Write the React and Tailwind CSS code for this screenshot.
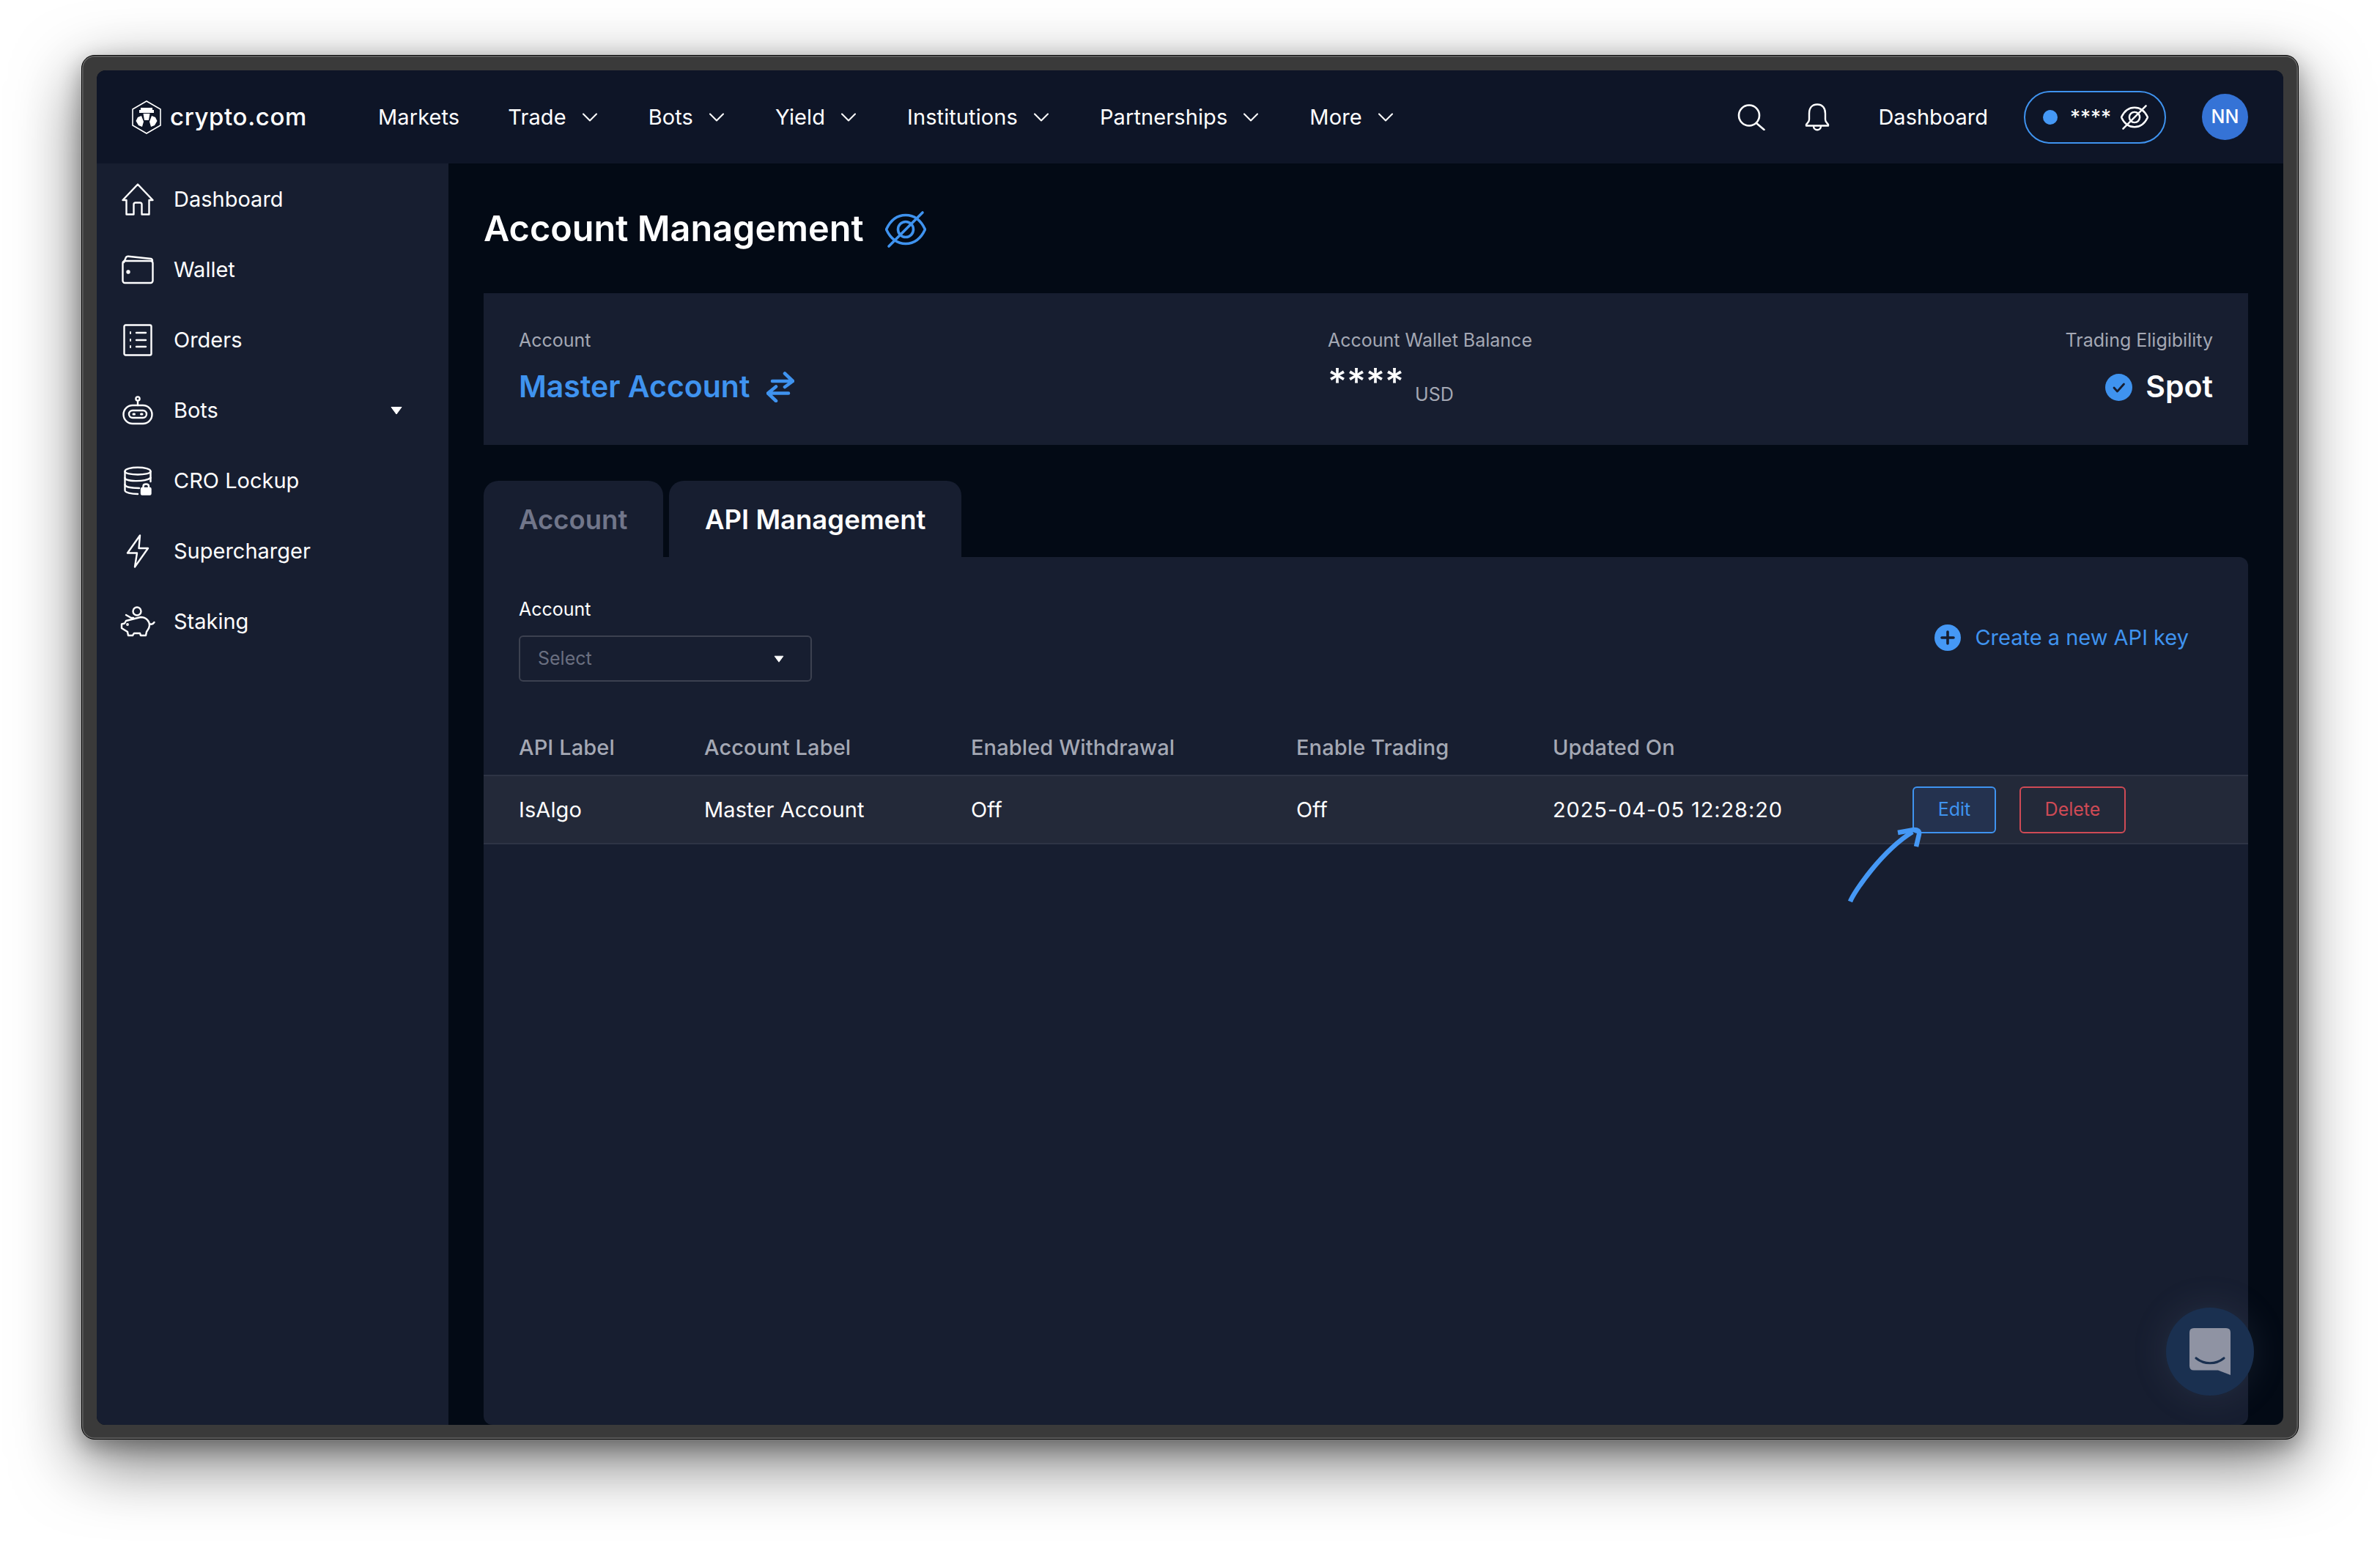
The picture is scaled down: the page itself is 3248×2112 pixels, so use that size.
import { ChevronDown } from 'lucide-react';

const navItems = ['Trade', 'Bots', 'Yield', 'Institutions', 'Partnerships', 'More'];

function Logo() {
  return (
    <svg width="40" height="46" viewBox="0 0 40 46" fill="none">
      <path d="M20 1 L39 12 V34 L20 45 L1 34 V12 Z" stroke="white" strokeWidth="1.6" />
      <path d="M12 10 H28 V13 H30 V17 H10 V13 H12 Z M15.5 18 H24.5 L23 27 H17 Z" fill="white" />
      <path d="M8 23 L13 21 L16 29 L14 36 L9 34 L5.5 28 Z M32 23 L27 21 L24 29 L26 36 L31 34 L34.5 28 Z" fill="white" />
    </svg>
  );
}

function EyeSlash({ className, size = 40 }) {
  return (
    <svg width={size} height={size} viewBox="0 0 56 56" fill="none" stroke="currentColor" strokeWidth="3.6" strokeLinecap="round" className={className}>
      <path d="M1.5 28 C8 14 18 8.5 28 8.5 C38 8.5 48 14 54.5 28 C48 42 38 47.5 28 47.5 C18 47.5 8 42 1.5 28 Z" />
      <circle cx="28" cy="28" r="10.5" />
      <path d="M5 51 L51 5" />
    </svg>
  );
}

const stroke = { fill: 'none', stroke: 'white', strokeWidth: 2.4, strokeLinejoin: 'round', strokeLinecap: 'round' };

function HomeIcon() {
  return (
    <svg width="44" height="44" viewBox="0 0 44 44" {...stroke}>
      <path d="M1.5 23 L22 1.5 L42.5 23 H37.5 V42.5 H27.5 V29 Q27.5 26.5 25 26.5 H19 Q16.5 26.5 16.5 29 V42.5 H6.5 V23 Z" />
    </svg>
  );
}

function WalletIcon() {
  return (
    <svg width="44" height="40" viewBox="0 0 44 40" {...stroke}>
      <path d="M3 10 L6 3 Q7 1.5 9 1.7 L40 5 Q42 5.5 42 8" />
      <rect x="1.5" y="8" width="41" height="30" rx="3" />
      <circle cx="9" cy="23" r="1.5" fill="white" />
    </svg>
  );
}

function OrdersIcon() {
  return (
    <svg width="40" height="44" viewBox="0 0 40 44" {...stroke}>
      <rect x="1.5" y="1.5" width="37" height="41" rx="2" />
      <path d="M18 12 H31 M18 22 H31 M18 31 H31" />
      <path d="M9 12 H11 M9 22 H11 M9 31 H11" strokeWidth="3.6" strokeLinecap="butt" />
    </svg>
  );
}

function BotsIcon() {
  return (
    <svg width="42" height="40" viewBox="0 0 42 40" {...stroke}>
      <circle cx="21" cy="4" r="2.6" />
      <path d="M21 7 V13" />
      <rect x="1.5" y="13" width="39" height="25" rx="12.5" />
      <rect x="9" y="20" width="24" height="10" rx="5" />
      <path d="M15 25 H16.5 M25.5 25 H27" strokeWidth="3" />
    </svg>
  );
}

function LockupIcon() {
  return (
    <svg width="38" height="40" viewBox="0 0 38 40" {...stroke}>
      <path d="M1.5 7 C1.5 0 36.5 0 36.5 7 C36.5 13 1.5 13 1.5 7 Z" />
      <path d="M1.5 7 V33 C1.5 36 10 38 19 38 M36.5 7 V21" />
      <path d="M1.5 16 C1.5 21 28 22 36.5 16 M1.5 25 C1.5 29 13 30 21 30" />
      <rect x="24" y="30" width="12.5" height="8.5" rx="1" fill="white" />
      <path d="M26.5 30 V27.5 Q26.5 24.5 30.2 24.5 Q34 24.5 34 27.5 V30" />
    </svg>
  );
}

function BoltIcon() {
  return (
    <svg width="32" height="46" viewBox="0 0 32 46" {...stroke}>
      <path d="M19 1.5 L2 25.5 H15 L12 44.5 L30 19 H17.5 Z" />
    </svg>
  );
}

function PigIcon() {
  return (
    <svg width="48" height="42" viewBox="0 0 48 42" {...stroke}>
      <circle cx="23" cy="7" r="5.5" />
      <path d="M8 12 L15 16 H18 M28 15 C36 15 40 21 40 26 C40 31 37 33 36 35 L35 40 H28 L27 37 H19 L17 40 H11 L10 35 L2 30 V24.5 L6 23.5 L8 20 Z" />
      <path d="M40 24 Q44 26 46.5 22" />
      <circle cx="10" cy="25" r="0.7" fill="white" />
    </svg>
  );
}

const sideItems = [
  { label: 'Dashboard', icon: HomeIcon },
  { label: 'Wallet', icon: WalletIcon },
  { label: 'Orders', icon: OrdersIcon },
  { label: 'Bots', icon: BotsIcon, caret: true },
  { label: 'CRO Lockup', icon: LockupIcon },
  { label: 'Supercharger', icon: BoltIcon },
  { label: 'Staking', icon: PigIcon },
];

function Caret({ className }) {
  return (
    <svg width="16" height="12" viewBox="0 0 16 12" className={className}>
      <path d="M1 1.5 H15 L8 11 Z" fill="white" stroke="white" strokeWidth="1" strokeLinejoin="round" />
    </svg>
  );
}

function Header() {
  return (
    <header className="flex h-[127px] shrink-0 items-center bg-[#0e1527] px-[48px] text-white">
      <div className="flex items-center gap-[12px]">
        <Logo />
        <span className="w-[284px] text-[33px] font-medium tracking-[0.6px]">crypto.com</span>
      </div>
      <nav className="flex items-center text-[29px] tracking-[0.1px]">
        <span className="mr-[66px]">Markets</span>
        {navItems.map((label) => (
          <span key={label} className="mr-[62px] flex items-center gap-[14px]">
            {label}
            <ChevronDown size={36} strokeWidth={1.4} />
          </span>
        ))}
      </nav>
      <div className="ml-auto flex items-center">
        <svg width="38" height="36" viewBox="0 0 38 36" fill="none" stroke="white" strokeWidth="2.6" strokeLinecap="round">
          <circle cx="16" cy="15.5" r="14" />
          <path d="M26 26 L36.5 35" />
        </svg>
        <svg width="34" height="38" viewBox="0 0 34 38" fill="none" stroke="white" strokeWidth="2.4" strokeLinejoin="round" className="ml-[54px]">
          <path d="M17 1.5 C9 1.5 6 7.5 6 14 V22 C6 26 3 27 2 29 V30.5 H32 V29 C31 27 28 26 28 22 V14 C28 7.5 25 1.5 17 1.5 Z" />
          <path d="M12 31 C12 38 22 38 22 31" />
        </svg>
        <span className="ml-[66px] text-[29px]">Dashboard</span>
        <div className="ml-[49px] flex h-[72px] w-[194px] items-center rounded-full border-2 border-[#3f93ef] pl-[24px]">
          <span className="size-[20px] rounded-full bg-[#4598f5]" />
          <span className="ml-[17px] text-[28px] leading-none">****</span>
          <EyeSlash className="ml-[13px] text-white" size={38} />
        </div>
        <div className="ml-[49px] flex size-[63px] items-center justify-center rounded-full bg-[#3573d6] text-[25px] font-medium">NN</div>
      </div>
    </header>
  );
}

function Sidebar() {
  return (
    <aside className="w-[480px] shrink-0 bg-[#171e30] pt-[1px] text-white">
      {sideItems.map(({ label, icon: Icon, caret }) => (
        <div key={label} className="flex h-[96px] items-center pl-[32px] pr-[63px] text-[29px]">
          <div className="flex w-[48px] justify-center">
            <Icon />
          </div>
          <span className="ml-[25px]">{label}</span>
          {caret && <Caret className="ml-auto" />}
        </div>
      ))}
    </aside>
  );
}

function StatCard() {
  return (
    <section className="mt-[59px] grid h-[207px] grid-cols-[1104px_1fr_auto] bg-[#171e30] px-[48px] pt-[46px]">
      <div>
        <p className="text-[25px] leading-[36px] text-[#a4a8b4]">Account</p>
        <div className="mt-[16px] flex h-[60px] items-center gap-[23px] text-[#3f93ef]">
          <span className="text-[41px] font-semibold">Master Account</span>
          <svg width="38" height="42" viewBox="0 0 38 42" fill="none" stroke="currentColor" strokeWidth="4.6" strokeLinecap="round" strokeLinejoin="round">
            <path d="M8 13 H36 M25 2.5 L36 13 L25 21" />
            <path d="M30 29.5 H2 M13 20.5 L2 29.5 L13 40" />
          </svg>
        </div>
      </div>
      <div>
        <p className="text-[25px] leading-[36px] text-[#a4a8b4]">Account Wallet Balance</p>
        <div className="mt-[16px] flex h-[60px]">
          <span className="mt-[-8px] text-[50px] font-medium leading-[60px] text-white">****</span>
          <span className="ml-[15px] mt-[10px] text-[25px] leading-[60px] text-[#a4a8b4]">USD</span>
        </div>
      </div>
      <div className="text-right">
        <p className="text-[25px] leading-[36px] text-[#a4a8b4]">Trading Eligibility</p>
        <div className="mt-[16px] flex h-[60px] items-center justify-end gap-[18px]">
          <svg width="37" height="37" viewBox="0 0 37 37">
            <circle cx="18.5" cy="18.5" r="18.5" fill="#3f93ef" />
            <path d="M12 19 L16.5 24 L25.5 14" fill="none" stroke="#171e30" strokeWidth="2.8" strokeLinecap="round" strokeLinejoin="round" />
          </svg>
          <span className="text-[41px] font-semibold text-white">Spot</span>
        </div>
      </div>
    </section>
  );
}

function Tabs() {
  return (
    <div className="mt-[49px] flex h-[104px] gap-[8px] text-[36.5px] font-semibold">
      <div className="flex w-[245px] items-center rounded-t-[20px] bg-[#171e30] pl-[48px] pt-[2px] text-[#71768a]">Account</div>
      <div className="flex w-[399px] items-center rounded-t-[20px] bg-[#171e30] pl-[49px] pt-[2px] text-white">API Management</div>
    </div>
  );
}

function KeysTable() {
  const cols = 'grid grid-cols-[253px_364px_444px_350px_491px_1fr] items-center px-[48px]';
  return (
    <div className="mt-[52px] text-[29px]">
      <div className={`${cols} h-[75px] font-medium tracking-[0.1px] text-[#a4a8b4]`}>
        <span>API Label</span>
        <span>Account Label</span>
        <span>Enabled Withdrawal</span>
        <span>Enable Trading</span>
        <span>Updated On</span>
      </div>
      <div className={`${cols} h-[95px] border-y-2 border-[#2e3445] bg-[#232939] tracking-[0.1px] text-white`}>
        <span>IsAlgo</span>
        <span>Master Account</span>
        <span>Off</span>
        <span>Off</span>
        <span className="tracking-[0.9px]">2025-04-05 12:28:20</span>
        <div className="flex gap-[32px] text-[25px] tracking-normal">
          <button className="flex h-[64px] w-[114px] items-center justify-center rounded-[6px] border-2 border-[#3f93ef] bg-[#24324f] text-[#3f93ef]">Edit</button>
          <button className="flex h-[64px] w-[145px] items-center justify-center rounded-[6px] border-2 border-[#cf4a55] text-[#cf4a55]">Delete</button>
        </div>
      </div>
    </div>
  );
}

function ChatButton() {
  return (
    <div className="absolute bottom-[40px] right-[-8px] flex size-[120px] items-center justify-center rounded-full bg-[#1a3050] shadow-[0_0_50px_rgba(120,130,160,0.16)]">
      <svg width="56" height="64" viewBox="0 0 56 64">
        <path d="M6 0 H50 Q56 0 56 6 V64 L39 57.5 H6 Q0 57.5 0 51.5 V6 Q0 0 6 0 Z" fill="#8f93a3" />
        <path d="M9 41 C20 50 36 50 47 41" fill="none" stroke="#1a3050" strokeWidth="3.2" strokeLinecap="round" />
      </svg>
    </div>
  );
}

export default function App() {
  return (
    <div className="h-[2112px] w-[3248px] overflow-hidden bg-white pl-[111px] pt-[75px] font-['Inter',sans-serif]">
      <div className="h-[1889px] w-[3026px] rounded-[18px] border border-black bg-[#3a3a3a] px-[20px] pb-[19px] pt-[20px] shadow-[0_30px_90px_rgba(0,0,0,0.55),0_10px_30px_rgba(0,0,0,0.3),inset_0_0_0_1.5px_#686868]">
        <div className="flex h-full flex-col overflow-hidden rounded-[12px] bg-[#030a15]">
          <Header />
          <div className="flex min-h-0 flex-1">
            <Sidebar />
            <main className="flex min-w-0 flex-1 flex-col px-[48px]">
              <div className="mt-[61px] flex h-[57px] items-center gap-[29px] text-[#3f93ef]">
                <h1 className="text-[48.6px] font-semibold text-white">Account Management</h1>
                <EyeSlash size={56} />
              </div>
              <StatCard />
              <Tabs />
              <div className="relative flex-1 rounded-b-[12px] rounded-tr-[12px] bg-[#171e30]">
                <div className="flex items-center justify-between pl-[48px] pr-[81px] pt-[53px]">
                  <div>
                    <p className="text-[25px] leading-[36px] text-white">Account</p>
                    <div className="mt-[18px] flex h-[63px] w-[400px] items-center justify-between rounded-[6px] border-2 border-[#3c4150] pl-[24px] pr-[35px] text-[25px] text-[#6a6f80]">
                      Select
                      <Caret className="scale-[0.85]" />
                    </div>
                  </div>
                  <div className="mt-[-4px] flex items-center gap-[19px] text-[29px] text-[#3f93ef]">
                    <svg width="36" height="36" viewBox="0 0 36 36">
                      <circle cx="18" cy="18" r="18" fill="#4598f5" />
                      <path d="M18 10 V26 M10 18 H26" stroke="#171e30" strokeWidth="3.6" strokeLinecap="round" />
                    </svg>
                    Create a new API key
                  </div>
                </div>
                <KeysTable />
                {/* hand drawn arrow on top of the row */}
                <svg width="110" height="110" viewBox="0 0 110 110" fill="none" stroke="#4598f5" strokeWidth="6.5" className="absolute left-[1860px] top-[365px]">
                  <path d="M5 105 C10 92 48 36 90 10" />
                  <path d="M70 11 L92 7 Q100 7 99 13 L95 30" />
                </svg>
                <ChatButton />
              </div>
            </main>
          </div>
        </div>
      </div>
    </div>
  );
}
